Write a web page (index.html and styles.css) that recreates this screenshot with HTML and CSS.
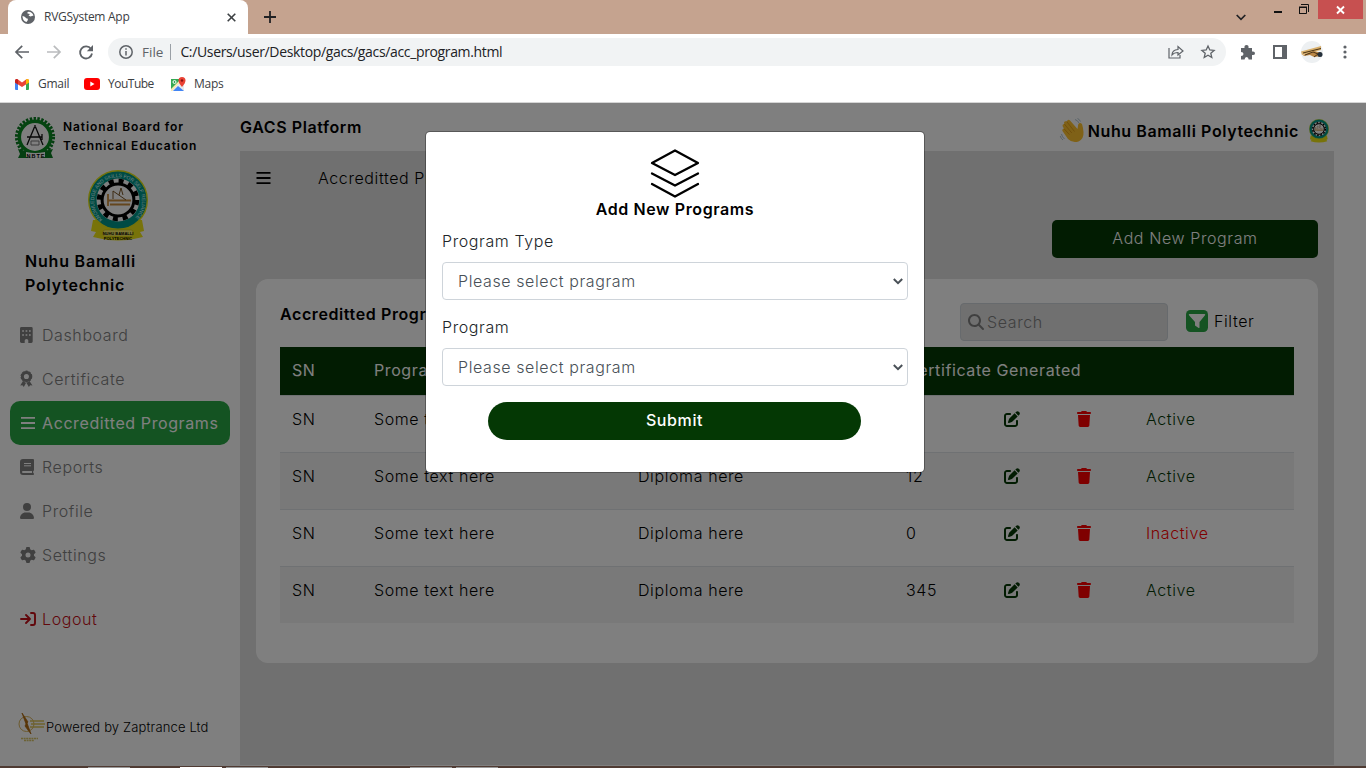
FILE: index.html
```html
<!DOCTYPE html>
<html lang="en">
<head>
<meta charset="utf-8">
<title>RVGSystem App</title>
<link rel="stylesheet" href="styles.css">
</head>
<body>
<svg class="defs" width="0" height="0">
  <symbol id="edit" viewBox="0 0 512 512"><path d="M471.6 21.7c-21.9-21.9-57.3-21.9-79.2 0L362.3 51.7l97.9 97.9 30.1-30.1c21.9-21.9 21.9-57.3 0-79.2L471.6 21.7zm-299.2 220c-6.1 6.1-10.8 13.6-13.5 21.9l-29.6 88.8c-2.9 8.6-.6 18.1 5.8 24.6s15.9 8.7 24.6 5.8l88.8-29.6c8.2-2.7 15.7-7.4 21.9-13.5L437.7 172.3 339.7 74.3 172.4 241.7zM96 64C43 64 0 107 0 160V416c0 53 43 96 96 96H352c53 0 96-43 96-96V320c0-17.700-14.300-32-32-32s-32 14.300-32 32v96c0 17.700-14.300 32-32 32H96c-17.700 0-32-14.300-32-32V160c0-17.700 14.300-32 32-32h96c17.700 0 32-14.300 32-32s-14.300-32-32-32H96z"/></symbol>
  <symbol id="trash" viewBox="0 0 448 512"><path d="M135.200 17.700L128 32H32C14.300 32 0 46.300 0 64S14.300 96 32 96H416c17.700 0 32-14.300 32-32s-14.300-32-32-32H320l-7.200-14.300C307.400 6.800 296.300 0 284.200 0H163.800c-12.100 0-23.200 6.800-28.600 17.700zM416 128H32L53.200 467c1.600 25.300 22.600 45 47.900 45H346.900c25.300 0 46.300-19.700 47.900-45L416 128z"/></symbol>
  <symbol id="bars" viewBox="0 0 14 16"><path d="M0 2.900h14M0 8h14M0 13.100h14" stroke="currentColor" stroke-width="1.900"/></symbol>
  <symbol id="crest" viewBox="0 0 60 72">
    <path d="M5 50L3 61l5 1-3 5q25 7 50 0l-3-5 4-1-2-11z" fill="#f0e614"/>
    <circle cx="30" cy="30" r="29.300" fill="#009688" stroke="#e8e514" stroke-width="1.400"/>
    <circle cx="30" cy="30" r="21.500" fill="#fff"/>
    <circle cx="30" cy="30" r="18.900" fill="none" stroke="#000" stroke-width="4.600" stroke-dasharray="4.950 4.950"/>
    <circle cx="30" cy="30" r="15.900" fill="none" stroke="#000" stroke-width="3"/>
    <path d="M20 24v12M20 30.500h23M22 34.500h20" stroke="#c98c3c" stroke-width="1.800"/><path d="M25 29v-8l13 9M33 18l-2 7M33 18l2 7" stroke="#7a5525" fill="none"/>
    <path id="arc" d="M14.500 49.500A24 24 0 1 1 45.500 49.500" fill="none"/>
  </symbol>
</svg>

<header class="browser">
  <div class="tabstrip">
    <div class="tab">
      <svg width="14" height="14" viewBox="0 0 14 14"><circle cx="7" cy="7" r="7" fill="#5f6368"/><path d="M1.500 6q2 0 3 1.500t2.500 1q0 2-1.500 3.500-4-1-4-6zM6.500 2q4-1 6 3.500L9.500 6.500 7.500 5.500 9 4 6.500 3.500z" fill="#fff"/></svg>
      <span class="tab-title">RVGSystem App</span>
      <svg width="9" height="9" viewBox="0 0 9 9"><path d="M.7.7l7.600 7.600M8.300.7L.7 8.300" stroke="#3c4043" stroke-width="1.600"/></svg>
    </div>
    <svg class="plus" width="12" height="12" viewBox="0 0 12 12"><path d="M6 0v12M0 6h12" stroke="#202124" stroke-width="1.800"/></svg>
    <div class="window-buttons">
      <svg class="chev" width="10" height="7" viewBox="0 0 10 7"><path d="M.7 1l4.300 4.300L9.300 1" fill="none" stroke="#202124" stroke-width="1.700"/></svg>
      <svg class="min" width="8" height="2"><path d="M0 1h8" stroke="#111" stroke-width="2"/></svg>
      <svg class="restore" width="10" height="10" viewBox="0 0 10 10"><path d="M0 3.500h7M.5 3v7M7.500 3v6.500H0M2 .5h7.500V8" fill="none" stroke="#111"/><path d="M0 3h8" stroke="#111"/></svg>
      <span class="close"><svg width="9" height="8" viewBox="0 0 9 8"><path d="M1 .5l7 7M8 .5l-7 7" stroke="#fff" stroke-width="1.900"/></svg></span>
    </div>
  </div>
  <div class="toolbar">
    <svg class="back" width="14" height="14" viewBox="0 0 14 14"><path d="M14 7H1.500M7.200.8L1 7l6.200 6.200" fill="none" stroke="#5f6368" stroke-width="1.700"/></svg>
    <svg class="fwd" width="14" height="14" viewBox="0 0 14 14"><path d="M0 7h12.500M6.800.8L13 7l-6.200 6.200" fill="none" stroke="#babcbe" stroke-width="1.700"/></svg>
    <svg class="reload" width="14" height="14" viewBox="0 0 14 14"><path d="M12 4A6 6 0 1 0 13 8.500" fill="none" stroke="#5f6368" stroke-width="1.800"/><path d="M14 0v6.200H7.800z" fill="#5f6368"/></svg>
    <div class="omnibox">
      <svg width="14" height="14" viewBox="0 0 14 14"><circle cx="7" cy="7" r="6.200" fill="none" stroke="#5f6368" stroke-width="1.500"/><path d="M7 6v4.500M7 3.300v1.500" stroke="#5f6368" stroke-width="1.500"/></svg>
      <span class="scheme">File</span><span class="bar"></span><span class="url">C:/Users/user/Desktop/gacs/gacs/acc_program.html</span>
      <svg class="share" width="16" height="14" viewBox="0 0 16 14"><path d="M1 3v10h11v-3M4 10q0-5 6-5.500V1.500L15 6l-5 4V7.500Q6 7.500 4 10z" fill="none" stroke="#5f6368" stroke-width="1.200"/></svg>
      <svg class="star" width="14" height="14" viewBox="0 0 14 14"><path d="M7 1l1.800 4 4.300.4-3.300 2.900 1 4.200L7 10.300l-3.800 2.200 1-4.200L.9 5.400 5.200 5z" fill="none" stroke="#5f6368" stroke-width="1.300"/></svg>
    </div>
    <svg class="puzzle" width="15" height="15" viewBox="0 0 15 15"><path d="M1 3h3.500q-.5-3 2-3t2 3H12v3.500q3-.5 3 1.700T12 10v4.500H8.600q0-2.500-2-2.500t-2 2.500H1V11q2.500 0 2.500-2T1 7z" fill="#5f6368"/></svg>
    <svg class="panel" width="14" height="14" viewBox="0 0 14 14"><path d="M0 0h14v14H0z" fill="#5f6368"/><path d="M2 2h7v10H2z" fill="#fff"/></svg>
    <svg class="avatar" width="22" height="22" viewBox="0 0 22 22"><circle cx="11" cy="11" r="11" fill="#edf0f2"/><path d="M0 10.500L20 5v4L1 14z" fill="#d9b06c"/><path d="M2 12L20 7.500" stroke="#4a3316"/><path d="M2 14l11-4 8 2v3l-8 1-4-2-6 1z" fill="#b98645"/><path d="M4 14l8-3 5 2-4 3" fill="none" stroke="#4a3316"/><circle cx="19" cy="13.500" r="2.500" fill="#25303b"/></svg>
    <svg class="dots" width="4" height="14" viewBox="0 0 4 14"><g fill="#5f6368"><circle cx="2" cy="2" r="1.600"/><circle cx="2" cy="7" r="1.600"/><circle cx="2" cy="12" r="1.600"/></g></svg>
  </div>
  <div class="bookmarks">
    <svg width="14" height="11" viewBox="0 0 14 11"><path d="M0 1.500h3V11H1q-1 0-1-1z" fill="#4285f4"/><path d="M11 1.500h3V10q0 1-1 1h-2z" fill="#34a853"/><path d="M0 1.500Q1-.8 3 .6l4 3 4-3q2-1.400 3 .9v2L7 8 0 3.500z" fill="#ea4335"/><path d="M11 .6q2-1.400 3 .9v2L11 5.500z" fill="#fbbc04"/><path d="M0 1.500v2l3 2V.6Q1-.8 0 1.500z" fill="#c5221f"/></svg>
    <span class="bm gmail">Gmail</span>
    <svg width="16" height="12" viewBox="0 0 16 12"><rect width="16" height="12" rx="3" fill="#f00"/><path d="M6.300 3.500v5L10.500 6z" fill="#fff"/></svg>
    <span class="bm youtube">YouTube</span>
    <svg width="15" height="15" viewBox="0 0 15 15"><path d="M0 2h13v12H0z" fill="#34a853"/><path d="M0 14L9 4l4 3v7z" fill="#e8eaed"/><path d="M2 14l5-5 6 5z" fill="#4285f4"/><path d="M0 12L10 2l1 1L1 14H0z" fill="#fbe9b0"/><circle cx="3.500" cy="5" r="1.500" fill="none" stroke="#fff"/><path d="M11 10Q7.500 6 7.500 3.500a3.500 3.500 0 0 1 7 0Q14.500 6 11 10z" fill="#ea4335"/><circle cx="11" cy="3.500" r="1.200" fill="#811"/></svg>
    <span class="bm maps">Maps</span>
  </div>
</header>

<div class="page">
  <aside class="sidebar">
    <div class="board">
      <svg width="42" height="42" viewBox="0 0 42 42"><circle cx="21" cy="20" r="18.300" fill="none" stroke="#0b7d22" stroke-width="3.500" stroke-dasharray="2.400 1.430"/><circle cx="21" cy="20" r="15.700" fill="#fff" stroke="#0b8a22" stroke-width="3.500"/><path d="M21 8v3M20.500 10L13 28M21.500 10L29 28M13 20h15M28 17v6" fill="none" stroke="#111" stroke-width="1.300"/><path d="M17 24h8v4h-8z" fill="none" stroke="#777"/><path d="M4 32l8 2q9 2 18 0l9-2-2 4 2 5H4l2-4z" fill="#0b7d22"/><path d="M12 35q9 2 19 0v5q-9 2-19 0z" fill="#fff"/><text class="nbte" x="22" y="40.500">NBTE</text></svg>
      <strong>National Board for<br>Technical Education</strong>
    </div>
    <svg class="school-logo" width="60" height="72" viewBox="0 0 60 72"><use href="#crest"/>
      <text class="crest-motto"><textPath href="#arc" textLength="114">KNOWLEDGE AND SKILLS FOR SELF RELIANCE</textPath></text>
      <rect x="15" y="60" width="30" height="6" rx="2" fill="#fff36b" stroke="#c3b80f" stroke-width=".5"/>
      <text class="crest-name" x="30" y="64.500">NUHU BAMALLI</text><text class="crest-name" x="30" y="69.500">POLYTECHNIC</text></svg>
    <h2>Nuhu Bamalli<br>Polytechnic</h2>
    <nav>
      <a class="item"><svg width="16" height="16" viewBox="0 0 16 16"><path d="M1.500 0h9.800q1.400 0 1.400 1.400v13.200q0 1.400-1.400 1.400H8.300v-2.500q0-1.500-1.800-1.500t-1.800 1.500V16H1.500Q0 16 0 14.600V1.400Q0 0 1.500 0z" fill="currentColor"/><path d="M2.200 3.200h1.700v1.600H2.200zM5.600 3.200h1.700v1.600H5.600zM9 3.200h1.700v1.600H9zM2.200 7.200h1.700v1.600H2.200zM5.600 7.200h1.700v1.600H5.600zM9 7.200h1.700v1.600H9z" fill="#fff"/></svg><span class="n1">Dashboard</span></a>
      <a class="item"><svg width="16" height="16" viewBox="0 0 16 16"><path d="M3 10L.2 14.500l2.200-.3L3.800 16 6 12M9.500 10l3 4.500-2.400-.3L8.900 16 6.500 12" fill="currentColor"/><circle cx="6.400" cy="5.500" r="4" fill="none" stroke="currentColor" stroke-width="2.900"/><circle cx="6.400" cy="5.500" r="5.300" fill="none" stroke="currentColor" stroke-width="1.200" stroke-dasharray="2.400 .93"/></svg><span class="n2">Certificate</span></a>
      <a class="item active"><svg width="15" height="16"><use href="#bars"/></svg><span class="n3">Accreditted Programs</span></a>
      <a class="item"><svg width="16" height="16" viewBox="0 0 16 16"><path d="M3 0h10q1 0 1 1v10q0 .8-.8 1v2q.8.200.8 1t-.8 1H3q-3 0-3-3V3q0-3 3-3zM3 12q-1 0-1 1t1 1h9v-2z" fill="currentColor" fill-rule="evenodd"/><path d="M4 4.500h7M4 6.800h7" stroke="#fff"/></svg><span class="n4">Reports</span></a>
      <a class="item"><svg width="16" height="16" viewBox="0 0 512 512"><path fill="currentColor" d="M224 256A128 128 0 1 0 224 0a128 128 0 1 0 0 256zm-45.700 48C79.800 304 0 383.800 0 482.300C0 498.700 13.300 512 29.700 512H418.300c16.400 0 29.700-13.300 29.700-29.700C448 383.800 368.200 304 269.700 304H178.300z"/></svg><span class="n5">Profile</span></a>
      <a class="item"><svg width="16" height="16" viewBox="0 0 512 512"><path fill="currentColor" d="M495.900 166.600c3.200 8.700 .5 18.400-6.400 24.600l-43.300 39.400c1.100 8.300 1.700 16.800 1.700 25.400s-.6 17.100-1.700 25.400l43.300 39.400c6.900 6.200 9.600 15.900 6.400 24.600c-4.400 11.900-9.700 23.300-15.800 34.300l-4.700 8.100c-6.600 11-14 21.400-22.100 31.200c-5.900 7.200-15.700 9.600-24.500 6.800l-55.700-17.700c-13.400 10.300-28.200 18.900-44 25.400l-12.500 57.100c-2 9.100-9 16.300-18.200 17.800c-13.800 2.300-28 3.500-42.500 3.500s-28.700-1.200-42.500-3.500c-9.200-1.500-16.200-8.700-18.200-17.800l-12.500-57.100c-15.800-6.500-30.600-15.100-44-25.400L83.100 425.900c-8.800 2.800-18.600 .3-24.500-6.800c-8.100-9.800-15.500-20.200-22.100-31.200l-4.700-8.100c-6.100-11-11.400-22.400-15.800-34.300c-3.200-8.700-.5-18.400 6.400-24.600l43.300-39.400C64.600 273.100 64 264.600 64 256s.6-17.100 1.700-25.400L22.400 191.200c-6.900-6.200-9.600-15.900-6.400-24.600c4.400-11.900 9.700-23.300 15.800-34.300l4.700-8.100c6.600-11 14-21.400 22.100-31.200c5.900-7.200 15.700-9.600 24.500-6.800l55.700 17.700c13.400-10.300 28.200-18.900 44-25.400l12.500-57.100c2-9.100 9-16.300 18.200-17.800C227.300 1.200 241.500 0 256 0s28.700 1.200 42.500 3.500c9.200 1.500 16.200 8.700 18.200 17.800l12.500 57.100c15.800 6.500 30.600 15.100 44 25.400l55.700-17.700c8.800-2.800 18.600-.3 24.500 6.800c8.100 9.800 15.500 20.200 22.100 31.200l4.700 8.100c6.100 11 11.400 22.400 15.800 34.300zM256 336a80 80 0 1 0 0-160 80 80 0 1 0 0 160z"/></svg><span class="n6">Settings</span></a>
      <a class="item logout"><svg width="16" height="16" viewBox="0 0 16 16"><path d="M1 8h9M6 4l4 4-4 4M11 2h2q2 0 2 2v8q0 2-2 2h-2" fill="none" stroke="currentColor" stroke-width="1.900" stroke-linecap="round" stroke-linejoin="round"/></svg><span class="n7">Logout</span></a>
    </nav>
    <div class="powered">
      <svg width="28" height="30" viewBox="0 0 28 30"><circle cx="8.500" cy="12" r="7.500" fill="none" stroke="#d9b45b"/><path d="M4 1l6 9-1 1 4 11-6-8 1-2z" fill="#b06a10" stroke="#b06a10" stroke-width=".8"/><path d="M12 9h14M13 12h14M12 15h14" stroke="#dcc45a" stroke-width="1.400"/><path d="M3 26.500h17M6 28.500h10" stroke="#d8c56a" stroke-width="1.300" stroke-dasharray="2 .6"/></svg>
      <span>Powered by Zaptrance Ltd</span>
    </div>
  </aside>

  <main class="main">
    <div class="topbar">
      <strong class="platform">GACS Platform</strong>
      <div class="account">
        <svg width="24" height="25" viewBox="0 0 24 25"><path d="M8 21L2.500 13q-.8-2 1.500-2.300L2.500 8Q2.300 6 4.300 6L4 4.500Q4.700 2.700 6.700 3.500 8 .8 10 2.500l7.500 8.500.7-4.500q1.300-2.500 3.800-.5 1.200 4 1.500 8 .5 7-5 9.500-6 2-10.500-2.500z" fill="#ffc22e"/><path d="M4 10.700l5.500 6M4.300 6l7.500 9M6.700 3.500l7.800 10" fill="none" stroke="#d58f13" stroke-width=".7"/><path d="M1.500 16q.5 3 3 5M.2 18q1 3 2.800 4M15 1.500q3 1 4 3.500M17.500.5q2 .8 3 3" fill="none" stroke="#9cb6c4" stroke-width=".8"/></svg>
        <strong>Nuhu Bamalli Polytechnic</strong>
        <svg class="mini" width="20" height="24"><use href="#crest"/></svg>
      </div>
    </div>
    <div class="content">
      <div class="crumb"><svg width="15" height="16"><use href="#bars"/></svg><span>Accreditted Programs</span></div>
      <button class="add">Add New Program</button>
      <section class="card">
        <div class="card-head">
          <strong>Accreditted Programs</strong>
          <div class="search"><svg width="16" height="16" viewBox="0 0 512 512"><path fill="currentColor" d="M416 208c0 45.900-14.900 88.300-40 122.700L502.600 457.400c12.500 12.500 12.500 32.800 0 45.300s-32.800 12.500-45.300 0L330.700 376c-34.400 25.200-76.800 40-122.700 40C93.100 416 0 322.900 0 208S93.100 0 208 0S416 93.100 416 208zM208 352a144 144 0 1 0 0-288 144 144 0 1 0 0 288z"/></svg><span>Search</span></div>
          <div class="filter"><svg width="22" height="22" viewBox="0 0 22 22"><rect width="22" height="22" rx="4.500" fill="#28a745"/><path d="M3.500 4h15q1.200 0 .5 1.200L13.500 12v5.500q-.3.900-1.200.3L9 15.500V12L3 5.200Q2.300 4 3.500 4z" fill="#fff"/></svg><span>Filter</span></div>
        </div>
        <table>
          <colgroup><col class="c1"><col class="c2"><col class="c3"><col class="c4"><col class="c5"><col class="c6"><col></colgroup>
          <thead><tr><th>SN</th><th>Program</th><th>Program Type</th><th colspan="4">Certificate Generated</th></tr></thead>
          <tbody>
            <tr><td>SN</td><td class="some">Some text here</td><td class="dip">Diploma here</td><td>12</td><td class="e"><svg width="16" height="16"><use href="#edit"/></svg></td><td class="t"><svg width="14" height="16"><use href="#trash"/></svg></td><td class="ok">Active</td></tr>
            <tr><td>SN</td><td class="some">Some text here</td><td class="dip">Diploma here</td><td>12</td><td class="e"><svg width="16" height="16"><use href="#edit"/></svg></td><td class="t"><svg width="14" height="16"><use href="#trash"/></svg></td><td class="ok">Active</td></tr>
            <tr><td>SN</td><td class="some">Some text here</td><td class="dip">Diploma here</td><td>0</td><td class="e"><svg width="16" height="16"><use href="#edit"/></svg></td><td class="t"><svg width="14" height="16"><use href="#trash"/></svg></td><td class="off">Inactive</td></tr>
            <tr><td>SN</td><td class="some">Some text here</td><td class="dip">Diploma here</td><td>345</td><td class="e"><svg width="16" height="16"><use href="#edit"/></svg></td><td class="t"><svg width="14" height="16"><use href="#trash"/></svg></td><td class="ok">Active</td></tr>
          </tbody>
        </table>
      </section>
    </div>
  </main>

  <div class="backdrop">
    <div class="modal">
      <svg class="layers" width="50" height="50" viewBox="0 0 50 50"><path d="M25 2.500L48 15 25 27 2 15zM2 25.500L25 37.500l23-12M2 36L25 48.500 48 36" fill="none" stroke="#000" stroke-width="2.300" stroke-linecap="round" stroke-linejoin="round"/></svg>
      <h3>Add New Programs</h3>
      <label class="l1">Program Type</label>
      <div class="select"><span>Please select pragram</span><svg width="10" height="7" viewBox="0 0 10 7"><path d="M.8 1L5 5.200 9.200 1" fill="none" stroke="#495057" stroke-width="2"/></svg></div>
      <label class="l2">Program</label>
      <div class="select"><span>Please select pragram</span><svg width="10" height="7" viewBox="0 0 10 7"><path d="M.8 1L5 5.200 9.200 1" fill="none" stroke="#495057" stroke-width="2"/></svg></div>
      <button class="submit">Submit</button>
    </div>
  </div>
</div>
<footer class="taskbar"><i class="g1"></i><i class="g2"></i><i class="g3"></i><i class="g4"></i><i class="g5"></i></footer>
</body>
</html>
```
FILE: styles.css
```css
* { box-sizing: border-box; }
body { margin: 0; width: 1366px; height: 768px; overflow: hidden; display: flex; flex-direction: column; background: #fff; font: 300 16px/24px Inter, "Liberation Sans", sans-serif; color: #000; letter-spacing: .6px; }
svg { display: block; flex: none; overflow: visible; }
.defs { position: absolute; visibility: hidden; }
h2, h3 { margin: 0; font-weight: 600; }
button { font: inherit; letter-spacing: inherit; border: 0; }
span, strong, label, button { white-space: nowrap; }
strong { font-weight: 600; }

.browser { height: 103px; flex: none; border-bottom: 1px solid #d5d5d5; font-family: "Open Sans", sans-serif; font-weight: 400; letter-spacing: -.28px; }
.tabstrip { height: 34px; background: #c5a38f; display: flex; align-items: flex-start; }
.tab { width: 240px; height: 34px; margin-left: 8px; border-radius: 8px 8px 0 0; background: #fff; display: flex; align-items: center; padding: 0 12px 0 13px; font-size: 12px; color: #3c4043; }
.tab-title { margin: 0 auto 0 9px; }
.plus { margin: 11px 0 0 16px; }
.window-buttons { margin-left: auto; display: flex; align-items: flex-start; padding-right: 3px; }
.chev { margin: 14px 28px 0 0; }
.min { margin: 11px 17px 0 0; }
.restore { margin: 4px 9px 0 0; }
.close { width: 45px; height: 19px; background: #c75050; display: grid; place-items: center; }
.toolbar { height: 36px; display: flex; align-items: center; padding-left: 15px; }
.fwd { margin-left: 18px; }
.reload { margin-left: 18px; }
.omnibox { width: 1118px; height: 28px; border-radius: 14px; background: #f1f3f4; margin-left: 15px; padding: 0 11px; display: flex; align-items: center; font-size: 14px; color: #202124; }
.scheme { margin-left: 9px; color: #5f6368; font-size: 13.500px; letter-spacing: 0; }
.url { letter-spacing: -.35px; }
.bar { width: 1px; height: 16px; background: #9aa0a6; margin: 0 9px 0 7px; }
.share { margin: 0 17px 0 auto; }
.puzzle { margin-left: 14px; }
.panel { margin-left: 18px; }
.avatar { margin-left: 14px; }
.dots { margin-left: 20px; }
.bookmarks { height: 28px; display: flex; align-items: center; padding-left: 15px; font-size: 12px; color: #3c4043; }
.bm { margin: 0 0 0 9px; }
.gmail { width: 46px; }
.youtube { width: 60px; margin-left: 8px; letter-spacing: -.5px; }
.youtube + svg { margin-left: 3px; }
.maps { margin-left: 8px; }

.page { position: relative; height: 663px; flex: none; display: flex; }
.sidebar { width: 240px; display: flex; flex-direction: column; flex: none; }
.board { display: flex; padding: 14px 0 0 14px; gap: 7px; font-size: 12px; line-height: 19px; height: 67px; letter-spacing: .9px; }
.nbte { font: 700 5.500px "Liberation Sans", sans-serif; text-anchor: middle; letter-spacing: 1px; }
.crest-motto { font: 5px "Liberation Sans", sans-serif; fill: #dff; letter-spacing: 0; }
.crest-name { font: 700 4px "Liberation Sans", sans-serif; text-anchor: middle; letter-spacing: 0; }
.school-logo { margin-left: 88px; }
h2 { margin: 7px 0 0 25px; font-size: 16px; line-height: 24px; letter-spacing: .8px; }
nav { padding: 16px 10px 0; }
.item { height: 44px; display: flex; align-items: center; padding-left: 10px; color: #808080; border-radius: 10px; }
.item svg { width: 16px; }
.item span { margin-left: 6px; }
.item.active { background: #28a745; color: #fff; font-weight: 400; }
.item.logout { margin-top: 20px; color: #c41019; }
.powered { display: flex; align-items: center; margin: auto 0 23px 18px; font-size: 13px; height: 32px; letter-spacing: .15px; }
.main { width: 1094px; }
.topbar { height: 48px; display: flex; justify-content: space-between; }
.platform { margin-top: 12px; }
.account { display: flex; align-items: center; padding: 7px 5px 0 0; }
.account strong { margin: 0 10px 0 4px; }
.content { height: 614px; background: #e0e0e0; padding: 0 16px; display: flex; flex-direction: column; }
.crumb { display: flex; align-items: center; height: 24px; margin-top: 15px; }
.crumb span { margin-left: 47px; }
.add { align-self: flex-end; width: 266px; height: 38px; border-radius: 5px; background: #043804; color: #fff; margin-top: 30px; padding: 0 0 2px; }
.card { height: 384px; margin-top: 21px; background: #fff; border-radius: 12px; padding: 0 24px; }
.card-head { height: 68px; display: flex; align-items: flex-start; }
.card-head strong { margin-top: 23px; width: 680px; }
.search { width: 208px; height: 38px; margin-top: 24px; background: #e0e0e0; border: 1px solid #ced4da; border-radius: 4px; display: flex; align-items: center; padding-left: 7px; gap: 3px; color: #808080; }
.filter { display: flex; margin: 31px 0 0 18px; gap: 6px; align-items: center; height: 22px; }
table { width: 1014px; table-layout: fixed; border-collapse: collapse; }
.c1 { width: 82px; } .c2 { width: 264px; } .c3 { width: 268px; } .c4 { width: 97px; } .c5 { width: 74px; } .c6 { width: 69px; }
th { height: 48px; background: #043804; color: #fff; font-weight: 400; text-align: left; padding: 0 12px 2px; }
td { height: 57px; padding: 11px 12px; vertical-align: top; border-top: 1px solid #dee2e6; white-space: nowrap; }
td svg { margin-top: 4px; }
tbody tr:nth-child(even) { background: #f2f2f2; }
.e { padding-left: 13px; }
.e svg { fill: #043804; }
.t svg { fill: #f00; }
.ok { color: #043804; }
.off { color: #f00; }
.backdrop { position: absolute; inset: 0; background: rgba(0,0,0,.5); padding: 28px 0 0 425px; }
.modal { width: 500px; height: 342px; background: #fff; background-clip: padding-box; border: 1px solid rgba(0,0,0,.3); border-radius: 5px; padding: 16px; display: flex; flex-direction: column; color: #212529; }
.layers { align-self: center; }
h3 { font-size: 16px; line-height: 24px; text-align: center; color: #000; margin: -1px 0 1px; }
label { margin: 7px 0 9px; height: 24px; }
.l2 { margin-top: 15px; }
.select { height: 38px; flex: none; border: 1px solid #ced4da; border-radius: 4px; display: flex; align-items: center; justify-content: space-between; padding: 0 4px 0 15px; color: #495057; }
.submit { width: 373px; height: 38px; border-radius: 19px; background: #043804; color: #fff; font-weight: 500; margin: 16px 0 0 46px; padding: 0 0 2px; flex: none; }
.taskbar { height: 2px; flex: none; background: #4f3b33; display: flex; align-items: flex-end; }
.taskbar i { height: 1px; width: 42px; background: #999; }
.taskbar .g1 { margin-left: 88px; }
.taskbar .g2 { margin-left: 50px; background: #fff; }
.taskbar .g3 { margin-left: 4px; }
.taskbar .g4 { margin-left: 142px; }
.taskbar .g5 { margin-left: 4px; }
```
